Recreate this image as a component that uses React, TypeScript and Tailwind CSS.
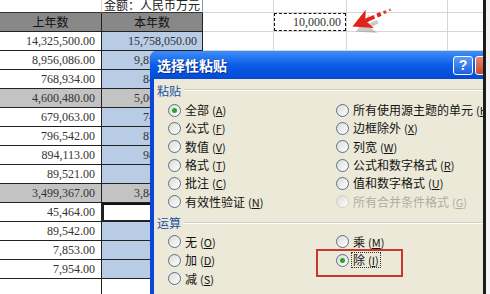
import clsx from 'clsx'

type Kind = 'blue' | 'gray' | 'white' | 'active'

const rows: { a: string; b: string; kind: Kind }[] = [
  { a: '14,325,500.00', b: '15,758,050.00', kind: 'blue' },
  { a: '8,956,086.00', b: '9,851,694.60', kind: 'blue' },
  { a: '768,934.00', b: '845,827.40', kind: 'blue' },
  { a: '4,600,480.00', b: '5,060,528.00', kind: 'gray' },
  { a: '679,063.00', b: '746,969.30', kind: 'blue' },
  { a: '796,542.00', b: '876,196.20', kind: 'blue' },
  { a: '894,113.00', b: '983,524.30', kind: 'blue' },
  { a: '89,521.00', b: '', kind: 'blue' },
  { a: '3,499,367.00', b: '3,849,303.70', kind: 'gray' },
  { a: '45,464.00', b: '', kind: 'active' },
  { a: '89,542.00', b: '', kind: 'blue' },
  { a: '7,853.00', b: '', kind: 'blue' },
  { a: '7,954.00', b: '', kind: 'blue' },
  { a: '', b: '', kind: 'white' },
]

const num = "font-['Liberation_Serif',serif] text-[12px] leading-[14px] text-[#333]"
const cjk = "font-['Noto_Sans_CJK_SC',sans-serif]"
const grid = 'border-r border-b border-[#d6d6d6]'

function Radio({ checked, disabled }: { checked?: boolean; disabled?: boolean }) {
  return (
    <span
      className={clsx(
        'inline-flex h-[13px] w-[13px] shrink-0 items-center justify-center rounded-full border bg-linear-to-br from-[#dcdbd2] to-white',
        disabled ? 'border-[#d2d0c4]' : 'border-[#56708f]',
      )}
    >
      {checked && <span className="h-[5px] w-[5px] rounded-full bg-[#2da32d]" />}
    </span>
  )
}

function Option({
  label,
  k,
  checked,
  disabled,
  focus,
}: {
  label: string
  k: string
  checked?: boolean
  disabled?: boolean
  focus?: boolean
}) {
  return (
    <div className="flex h-[18.3px] items-center gap-[3px]">
      <Radio checked={checked} disabled={disabled} />
      <span
        className={clsx(
          'whitespace-nowrap px-[1px] text-[12px] leading-[13px]',
          disabled ? 'text-[#b0ad9f]' : 'text-[#111]',
          focus && 'outline outline-1 outline-dotted outline-[#333]',
        )}
      >
        {label}
        <span className="ml-[3px] text-[11px] leading-[13px]">
          (<span className="underline">{k}</span>)
        </span>
      </span>
    </div>
  )
}

function Group({ title }: { title: string }) {
  return (
    <div className="flex h-[14px] items-center gap-[3px] pl-[3px]">
      <span className="text-[12px] leading-[13px] text-[#1b4fa6]">{title}</span>
      <span className="h-[2px] flex-1 border-t border-b border-t-[#d0cebf] border-b-white" />
    </div>
  )
}

export default function App() {
  return (
    <div className="relative h-[294px] w-[490px] overflow-hidden bg-white">
      {/* sheet */}
      <div className="flex flex-col">
        <div className="flex h-[13px]">
          <div className={clsx('w-[102px]', grid, 'border-b-[#333]')} />
          <div
            className={clsx(
              'flex w-[101px] items-end justify-center overflow-hidden border-r border-b border-b-[#333] border-r-[#999] text-[12px] leading-none text-[#222]',
              cjk,
            )}
          >
            <span className="pb-[1px]">金额：人民币万元</span>
          </div>
          <div className={clsx('w-[71px]', grid)} />
          <div className={clsx('w-[73px]', grid)} />
          <div className={clsx('w-[101px]', grid)} />
          <div className={clsx('w-[42px]', grid)} />
        </div>
        <div className="flex h-[19px]">
          <div
            className={clsx(
              'flex w-[102px] items-center justify-center border-r border-b border-[#222] bg-[#888] text-[12px] leading-[14px] text-[#111]',
              cjk,
            )}
          >
            上年数
          </div>
          <div
            className={clsx(
              'flex w-[101px] items-center justify-center border-r border-b border-[#222] bg-[#888] text-[12px] leading-[14px] text-[#111]',
              cjk,
            )}
          >
            本年数
          </div>
          <div className={clsx('w-[71px]', grid)} />
          <div className="w-[73px] border-b border-r border-[#d6d6d6]">
            <div
              className={clsx(
                'flex h-full items-center justify-end border border-dashed border-[#111] pr-[4px]',
                num,
              )}
            >
              10,000.00
            </div>
          </div>
          <div className={clsx('w-[101px]', grid)} />
          <div className={clsx('w-[42px]', grid)} />
        </div>
        {rows.map((r, i) => (
          <div key={i} className="flex h-[19px]">
            <div
              className={clsx(
                'flex w-[102px] items-center justify-end border-r border-b border-[#222] pr-[6px]',
                r.kind === 'gray' ? 'bg-[#c3c3c3]' : 'bg-white',
                num,
              )}
            >
              {r.a}
            </div>
            <div
              className={clsx(
                'flex w-[101px] items-center justify-end border-r border-b border-[#222] pr-[5px]',
                r.kind === 'gray' && 'bg-[#c3c3c3]',
                r.kind === 'blue' && 'bg-[#b9cce6]',
                r.kind === 'active' && 'border-t-2 border-l-2 border-b-2 border-t-[#111] bg-white',
                num,
              )}
            >
              {r.b}
            </div>
            <div className={clsx('w-[71px]', grid)} />
            <div className={clsx('w-[73px]', grid)} />
            <div className={clsx('w-[101px]', grid)} />
            <div className={clsx('w-[42px]', grid)} />
          </div>
        ))}
      </div>

      {/* arrow pointing at copied cell */}
      <svg className="absolute left-[349px] top-[5px]" width="48" height="28" viewBox="0 0 48 28">
        <g transform="translate(3 4) rotate(-24 20 12)" fill="#8a8a8a" opacity="0.45">
          <polygon points="1,15 20,5 16,13 25,13 25,17 16,17 20,25" />
        </g>
        <g transform="rotate(-24 20 12)">
          <polygon points="1,14 20,4 16,12 25,12 25,16 16,16 20,24" fill="#e2231a" />
          <rect x="28" y="12" width="4" height="4" fill="#d9261c" />
          <rect x="35" y="12.5" width="3" height="3" fill="#dc3a30" />
          <rect x="41" y="13" width="2" height="2" fill="#e0675f" />
        </g>
      </svg>

      {/* paste special dialog */}
      <div className={clsx('absolute left-[150px] top-[51px] h-[260px] w-[350px] overflow-hidden rounded-tl-[7px] bg-[#0a46d8]', cjk)}>
        <div className="flex h-[28px] items-center bg-linear-to-b from-[#3e8ef8] via-[#0a5ce8] to-[#0449d6] pl-[7px] pr-[4px]">
          <span className="text-[14px] font-bold leading-[16px] text-white [text-shadow:1px_1px_0_#0a2a80]">选择性粘贴</span>
          <span className="ml-auto flex h-[19px] w-[20px] items-center justify-center rounded-[3px] border border-white bg-linear-to-b from-[#5b9cf7] to-[#1c5fe0] font-['Liberation_Sans',sans-serif] text-[14px] font-bold leading-[16px] text-white">
            ?
          </span>
          <span className="ml-[2px] h-[19px] w-[21px] rounded-[3px] border border-white bg-linear-to-b from-[#e78a6a] to-[#c8482a]" />
        </div>
        <div className="ml-[4px] h-full bg-[#ece9d8] pt-[4px]">
          <Group title="粘贴" />
          <div className="mt-[4px] grid grid-cols-[168px_1fr] pl-[14px]">
            <div className="flex flex-col">
              <Option label="全部" k="A" checked />
              <Option label="公式" k="F" />
              <Option label="数值" k="V" />
              <Option label="格式" k="T" />
              <Option label="批注" k="C" />
              <Option label="有效性验证" k="N" />
            </div>
            <div className="flex flex-col">
              <Option label="所有使用源主题的单元" k="H" />
              <Option label="边框除外" k="X" />
              <Option label="列宽" k="W" />
              <Option label="公式和数字格式" k="R" />
              <Option label="值和数字格式" k="U" />
              <Option label="所有合并条件格式" k="G" disabled />
            </div>
          </div>
          <div className="mt-[5px]">
            <Group title="运算" />
          </div>
          <div className="mt-[3px] grid grid-cols-[168px_1fr] pl-[14px]">
            <div className="flex flex-col">
              <Option label="无" k="O" />
              <Option label="加" k="D" />
              <Option label="减" k="S" />
            </div>
            <div className="flex flex-col">
              <Option label="乘" k="M" />
              <Option label="除" k="I" checked focus />
            </div>
          </div>
        </div>
      </div>

      {/* highlight on the divide option */}
      <div className="absolute left-[316px] top-[249px] h-[28px] w-[87px] border-2 border-[#c8372d]" />

      {/* right edge of screenshot */}
      <div className="absolute left-[483px] top-0 h-full w-[3px] bg-[#1c1c1c]" />
      <div className="absolute left-[486px] top-0 h-full w-[4px] bg-[#f4f4f4]" />
    </div>
  )
}
